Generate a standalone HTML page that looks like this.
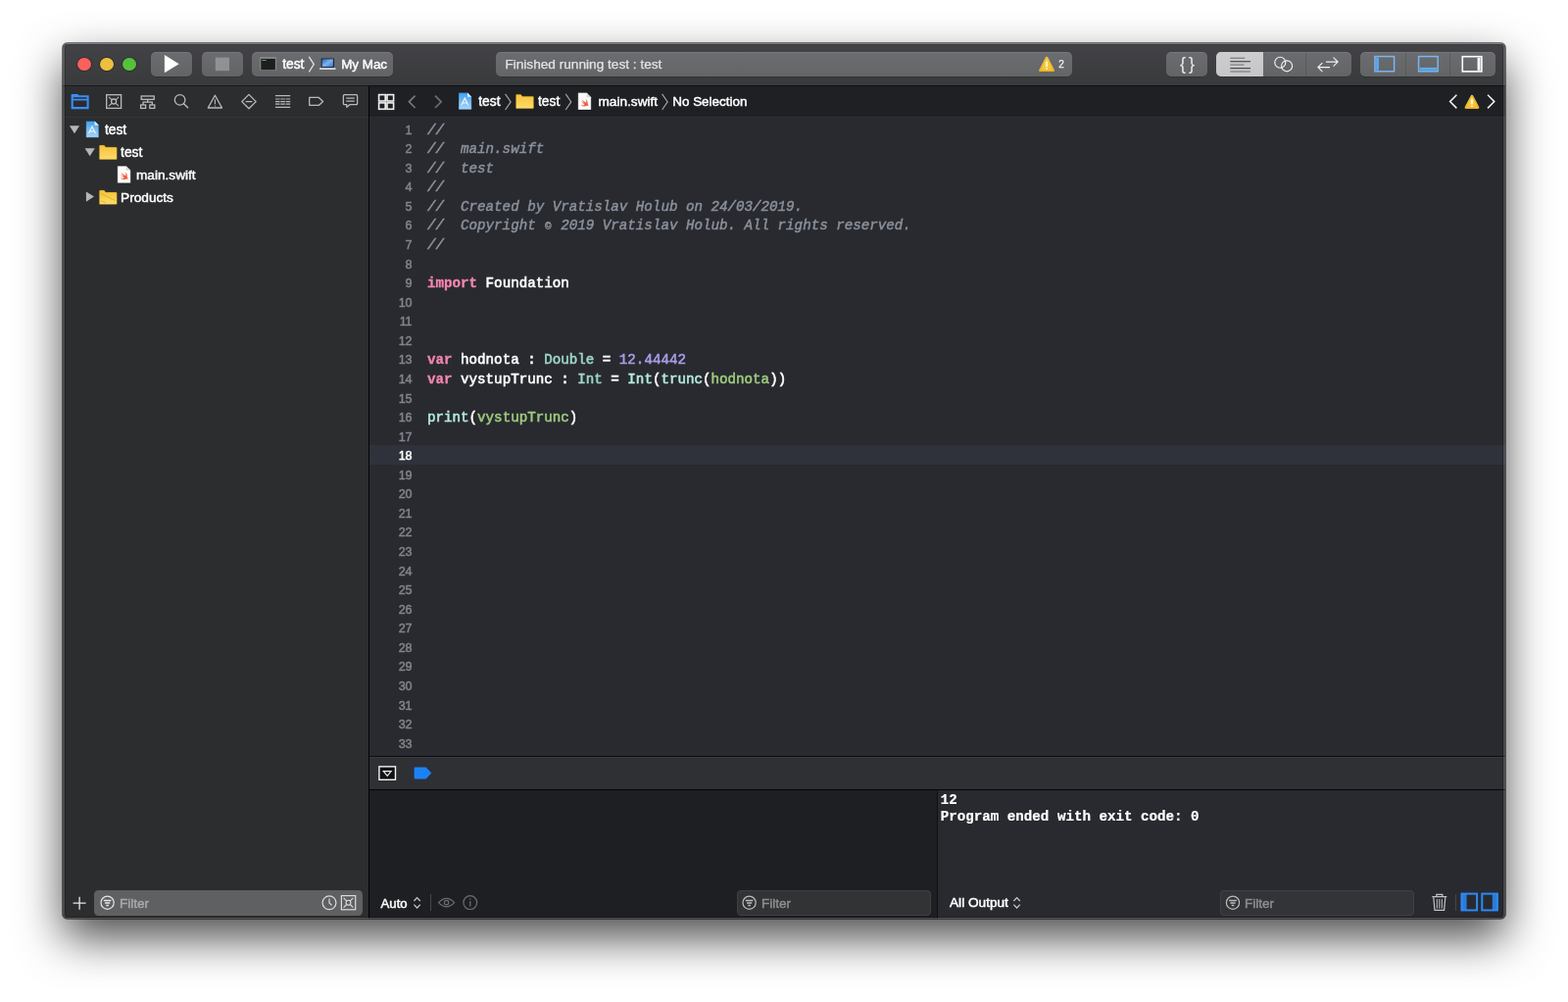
<!DOCTYPE html>
<html lang="en">
<head>
<meta charset="utf-8">
<title>test — main.swift</title>
<style>
html,body{margin:0;padding:0;background:#fff;}
body{width:1600px;height:1022px;overflow:hidden;position:relative;}
#win{position:absolute;left:64px;top:44px;width:1472px;height:893px;border-radius:5px;background:#292a30;
  box-shadow:0 0 0 1px rgba(0,0,0,.5),0 20px 46px rgba(0,0,0,.7);overflow:hidden;will-change:transform;}
#win>div,#win>span,#win>svg{position:absolute;}
#rim{left:0;top:0;width:1472px;height:893px;box-sizing:border-box;border-radius:5px;border:2px solid rgba(255,255,255,.14);border-top:1px solid rgba(255,255,255,.33);border-bottom:1px solid rgba(255,255,255,.2);pointer-events:none;}
#rim>div{width:100%;height:100%;box-sizing:border-box;border-radius:4px;border:1px solid rgba(0,0,0,.22);border-top-color:rgba(0,0,0,.12);}
.t{white-space:pre;}
.s{font-family:"Liberation Sans",sans-serif;-webkit-text-stroke:0.45px currentColor;}
.m{font-family:"Liberation Mono",monospace;-webkit-text-stroke:0.55px currentColor;}
.m b{-webkit-text-stroke:0.3px currentColor;}
.m i{-webkit-text-stroke:0.45px currentColor;}
svg{overflow:visible;}
#ico{left:0;top:0;pointer-events:none;}

</style>
</head>
<body>
<div id="win">
<div style="left:0px;top:0px;width:1472px;height:43px;background:linear-gradient(#434347,#393a3c);"></div>
<div style="left:0px;top:42.6px;width:312px;height:1.4px;background:#1a1b1d;"></div>
<div style="left:312px;top:42.7px;width:1160px;height:1.3px;background:#101113;"></div>
<div style="left:0px;top:44px;width:312px;height:849px;background:#2c2d2f;"></div>
<div style="left:0px;top:75px;width:312px;height:1px;background:#353638;"></div>
<div style="left:312px;top:44px;width:1px;height:849px;background:#040406;"></div>
<div style="left:313px;top:44px;width:1159px;height:31px;background:#1f2024;"></div>
<div style="left:313px;top:75px;width:1159px;height:1px;background:#2e2f34;"></div>
<div style="left:313px;top:76px;width:1159px;height:651px;background:#292a30;"></div>
<div style="left:313px;top:410px;width:1159px;height:19.5px;background:#2f323b;"></div>
<div style="left:313px;top:727.2px;width:1159px;height:1.2px;background:#0c0d0f;"></div>
<div style="left:313px;top:728.4px;width:1159px;height:32.6px;background:linear-gradient(#38393d 0,#38393d 1px,#2f3034 1.5px);"></div>
<div style="left:313px;top:760.9px;width:1159px;height:1.1px;background:#040406;"></div>
<div style="left:313px;top:762px;width:579px;height:131px;background:#1e1f23;"></div>
<div style="left:892px;top:762px;width:1px;height:131px;background:#0e0f11;"></div>
<div style="left:893px;top:762px;width:579px;height:131px;background:#292a30;"></div>
<div style="left:15.4px;top:14.6px;width:13.8px;height:13.8px;border-radius:50%;background:#fd605c;box-shadow:0 0 0 .8px rgba(0,0,0,.3);"></div>
<div style="left:38.3px;top:14.6px;width:13.8px;height:13.8px;border-radius:50%;background:#ecc03d;box-shadow:0 0 0 .8px rgba(0,0,0,.3);"></div>
<div style="left:61.2px;top:14.6px;width:13.8px;height:13.8px;border-radius:50%;background:#58c13c;box-shadow:0 0 0 .8px rgba(0,0,0,.3);"></div>
<div style="left:89.9px;top:8.6px;width:42.4px;height:25.4px;border-radius:5px;background:linear-gradient(#6b6c6f,#636466);box-shadow:inset 0 1px 0 rgba(255,255,255,.08),0 .5px .6px rgba(0,0,0,.28);"></div>
<div style="left:141.9px;top:8.6px;width:41.9px;height:25.4px;border-radius:5px;background:linear-gradient(#6b6c6f,#636466);box-shadow:inset 0 1px 0 rgba(255,255,255,.08),0 .5px .6px rgba(0,0,0,.28);"></div>
<div style="left:193.2px;top:8.6px;width:143.4px;height:25.4px;border-radius:5px;background:linear-gradient(#6b6c6f,#636466);box-shadow:inset 0 1px 0 rgba(255,255,255,.08),0 .5px .6px rgba(0,0,0,.28);"></div>
<div style="left:442.1px;top:8.6px;width:588.1px;height:25.4px;border-radius:5px;background:linear-gradient(#6c6d70,#646567);box-shadow:inset 0 1px 0 rgba(255,255,255,.08),0 .5px .6px rgba(0,0,0,.28);"></div>
<div style="left:1125.7px;top:8.6px;width:42.2px;height:25.4px;border-radius:5px;background:linear-gradient(#6b6c6f,#636466);box-shadow:inset 0 1px 0 rgba(255,255,255,.08),0 .5px .6px rgba(0,0,0,.28);"></div>
<div style="left:1177px;top:8.6px;width:138.2px;height:25.4px;border-radius:5px;background:linear-gradient(#6b6c6f,#636466);box-shadow:inset 0 1px 0 rgba(255,255,255,.08),0 .5px .6px rgba(0,0,0,.28);"></div>
<div style="left:1177px;top:8.6px;width:47.5px;height:25.4px;border-radius:5px 0 0 5px;background:linear-gradient(#cdcdcf,#c6c6c8);"></div>
<div style="left:1268px;top:8.5px;width:1px;height:25.5px;background:rgba(0,0,0,.12);"></div>
<div style="left:1324.4px;top:8.6px;width:138px;height:25.4px;border-radius:5px;background:linear-gradient(#6b6c6f,#636466);box-shadow:inset 0 1px 0 rgba(255,255,255,.08),0 .5px .6px rgba(0,0,0,.28);"></div>
<div style="left:1370.4px;top:8.5px;width:1px;height:25.5px;background:rgba(0,0,0,.12);"></div>
<div style="left:1414.75px;top:8.5px;width:1px;height:25.5px;background:rgba(0,0,0,.12);"></div>
<span class="t s" style="left:224.2px;top:12px;font-size:13.8px;line-height:20px;color:#fff;">test</span>
<span class="t s" style="left:284.2px;top:12px;font-size:13.4px;line-height:20px;color:#fff;">My Mac</span>
<span class="t s" style="left:451.4px;top:12px;font-size:13.65px;line-height:20px;color:#e4e4e4;-webkit-text-stroke:0.25px currentColor;">Finished running test : test</span>
<span class="t s" style="left:1016.2px;top:12px;font-size:10px;line-height:20px;color:#f0f0f0;-webkit-text-stroke:0.25px currentColor;">2</span>
<span class="t s" style="left:1139.9px;top:9px;font-size:18px;line-height:24px;color:rgba(255,255,255,.86);-webkit-text-stroke:0;">{</span>
<span class="t s" style="left:1149px;top:9px;font-size:18px;line-height:24px;color:rgba(255,255,255,.86);-webkit-text-stroke:0;">}</span>
<span class="t s" style="left:42.9px;top:79px;font-size:13.8px;line-height:20px;color:#fff;">test</span>
<span class="t s" style="left:59.1px;top:102px;font-size:13.8px;line-height:20px;color:#fff;">test</span>
<span class="t s" style="left:75px;top:125px;font-size:13.65px;line-height:20px;color:#fff;">main.swift</span>
<span class="t s" style="left:59.1px;top:148px;font-size:13.65px;line-height:20px;color:#fff;">Products</span>
<span class="t s" style="left:424.25px;top:50px;font-size:13.8px;line-height:20px;color:#fff;">test</span>
<span class="t s" style="left:485px;top:50px;font-size:13.8px;line-height:20px;color:#fff;">test</span>
<span class="t s" style="left:546.5px;top:50px;font-size:13.65px;line-height:20px;color:#fff;">main.swift</span>
<span class="t s" style="left:622.25px;top:50px;font-size:13.45px;line-height:20px;color:#fff;">No Selection</span>
<span class="t s" style="right:1115.7px;top:79px;font-size:12.65px;line-height:20px;color:#83858c;letter-spacing:-0.3px;">1</span>
<span class="t m" style="left:372px;top:79px;font-size:14.2px;line-height:20px;color:#ffffff;"><i style="color:#8a919b">//</i></span>
<span class="t s" style="right:1115.7px;top:98px;font-size:12.65px;line-height:20px;color:#83858c;letter-spacing:-0.3px;">2</span>
<span class="t m" style="left:372px;top:98px;font-size:14.2px;line-height:20px;color:#ffffff;"><i style="color:#8a919b">//  main.swift</i></span>
<span class="t s" style="right:1115.7px;top:118px;font-size:12.65px;line-height:20px;color:#83858c;letter-spacing:-0.3px;">3</span>
<span class="t m" style="left:372px;top:118px;font-size:14.2px;line-height:20px;color:#ffffff;"><i style="color:#8a919b">//  test</i></span>
<span class="t s" style="right:1115.7px;top:137px;font-size:12.65px;line-height:20px;color:#83858c;letter-spacing:-0.3px;">4</span>
<span class="t m" style="left:372px;top:137px;font-size:14.2px;line-height:20px;color:#ffffff;"><i style="color:#8a919b">//</i></span>
<span class="t s" style="right:1115.7px;top:157px;font-size:12.65px;line-height:20px;color:#83858c;letter-spacing:-0.3px;">5</span>
<span class="t m" style="left:372px;top:157px;font-size:14.2px;line-height:20px;color:#ffffff;"><i style="color:#8a919b">//  Created by Vratislav Holub on 24/03/2019.</i></span>
<span class="t s" style="right:1115.7px;top:176px;font-size:12.65px;line-height:20px;color:#83858c;letter-spacing:-0.3px;">6</span>
<span class="t m" style="left:372px;top:176px;font-size:14.2px;line-height:20px;color:#ffffff;"><i style="color:#8a919b">//  Copyright <span style="display:inline-block;width:8.52px;text-align:center;font-size:10.5px;vertical-align:0.3px;">©</span> 2019 Vratislav Holub. All rights reserved.</i></span>
<span class="t s" style="right:1115.7px;top:196px;font-size:12.65px;line-height:20px;color:#83858c;letter-spacing:-0.3px;">7</span>
<span class="t m" style="left:372px;top:196px;font-size:14.2px;line-height:20px;color:#ffffff;"><i style="color:#8a919b">//</i></span>
<span class="t s" style="right:1115.7px;top:216px;font-size:12.65px;line-height:20px;color:#83858c;letter-spacing:-0.3px;">8</span>
<span class="t s" style="right:1115.7px;top:235px;font-size:12.65px;line-height:20px;color:#83858c;letter-spacing:-0.3px;">9</span>
<span class="t m" style="left:372px;top:235px;font-size:14.2px;line-height:20px;color:#ffffff;"><b style="color:#f486b2">import</b> Foundation</span>
<span class="t s" style="right:1115.7px;top:255px;font-size:12.65px;line-height:20px;color:#83858c;letter-spacing:-0.3px;">10</span>
<span class="t s" style="right:1115.7px;top:274px;font-size:12.65px;line-height:20px;color:#83858c;letter-spacing:-0.3px;">11</span>
<span class="t s" style="right:1115.7px;top:294px;font-size:12.65px;line-height:20px;color:#83858c;letter-spacing:-0.3px;">12</span>
<span class="t s" style="right:1115.7px;top:313px;font-size:12.65px;line-height:20px;color:#83858c;letter-spacing:-0.3px;">13</span>
<span class="t m" style="left:372px;top:313px;font-size:14.2px;line-height:20px;color:#ffffff;"><b style="color:#f486b2">var</b> hodnota : <span style="color:#9dd6c6">Double</span> = <span style="color:#a59de6">12.44442</span></span>
<span class="t s" style="right:1115.7px;top:333px;font-size:12.65px;line-height:20px;color:#83858c;letter-spacing:-0.3px;">14</span>
<span class="t m" style="left:372px;top:333px;font-size:14.2px;line-height:20px;color:#ffffff;"><b style="color:#f486b2">var</b> vystupTrunc : <span style="color:#9dd6c6">Int</span> = <span style="color:#b3ebdf">Int</span>(<span style="color:#b3ebdf">trunc</span>(<span style="color:#9ccb7e">hodnota</span>))</span>
<span class="t s" style="right:1115.7px;top:353px;font-size:12.65px;line-height:20px;color:#83858c;letter-spacing:-0.3px;">15</span>
<span class="t s" style="right:1115.7px;top:372px;font-size:12.65px;line-height:20px;color:#83858c;letter-spacing:-0.3px;">16</span>
<span class="t m" style="left:372px;top:372px;font-size:14.2px;line-height:20px;color:#ffffff;"><span style="color:#b3ebdf">print</span>(<span style="color:#9ccb7e">vystupTrunc</span>)</span>
<span class="t s" style="right:1115.7px;top:392px;font-size:12.65px;line-height:20px;color:#83858c;letter-spacing:-0.3px;">17</span>
<span class="t s" style="right:1115.7px;top:411px;font-size:12.65px;line-height:20px;color:#fff;letter-spacing:-0.3px;">18</span>
<span class="t s" style="right:1115.7px;top:431px;font-size:12.65px;line-height:20px;color:#83858c;letter-spacing:-0.3px;">19</span>
<span class="t s" style="right:1115.7px;top:450px;font-size:12.65px;line-height:20px;color:#83858c;letter-spacing:-0.3px;">20</span>
<span class="t s" style="right:1115.7px;top:470px;font-size:12.65px;line-height:20px;color:#83858c;letter-spacing:-0.3px;">21</span>
<span class="t s" style="right:1115.7px;top:489px;font-size:12.65px;line-height:20px;color:#83858c;letter-spacing:-0.3px;">22</span>
<span class="t s" style="right:1115.7px;top:509px;font-size:12.65px;line-height:20px;color:#83858c;letter-spacing:-0.3px;">23</span>
<span class="t s" style="right:1115.7px;top:529px;font-size:12.65px;line-height:20px;color:#83858c;letter-spacing:-0.3px;">24</span>
<span class="t s" style="right:1115.7px;top:548px;font-size:12.65px;line-height:20px;color:#83858c;letter-spacing:-0.3px;">25</span>
<span class="t s" style="right:1115.7px;top:568px;font-size:12.65px;line-height:20px;color:#83858c;letter-spacing:-0.3px;">26</span>
<span class="t s" style="right:1115.7px;top:587px;font-size:12.65px;line-height:20px;color:#83858c;letter-spacing:-0.3px;">27</span>
<span class="t s" style="right:1115.7px;top:607px;font-size:12.65px;line-height:20px;color:#83858c;letter-spacing:-0.3px;">28</span>
<span class="t s" style="right:1115.7px;top:626px;font-size:12.65px;line-height:20px;color:#83858c;letter-spacing:-0.3px;">29</span>
<span class="t s" style="right:1115.7px;top:646px;font-size:12.65px;line-height:20px;color:#83858c;letter-spacing:-0.3px;">30</span>
<span class="t s" style="right:1115.7px;top:666px;font-size:12.65px;line-height:20px;color:#83858c;letter-spacing:-0.3px;">31</span>
<span class="t s" style="right:1115.7px;top:685px;font-size:12.65px;line-height:20px;color:#83858c;letter-spacing:-0.3px;">32</span>
<span class="t s" style="right:1115.7px;top:705px;font-size:12.65px;line-height:20px;color:#83858c;letter-spacing:-0.3px;">33</span>
<span class="t m" style="left:895.7px;top:762px;font-size:14.2px;line-height:20px;color:#fff;font-weight:700;-webkit-text-stroke:0.2px #fff;">12</span>
<span class="t m" style="left:895.7px;top:779px;font-size:14.2px;line-height:20px;color:#fff;font-weight:700;-webkit-text-stroke:0.2px #fff;">Program ended with exit code: 0</span>
<div style="left:32.25px;top:864px;width:273.75px;height:25.75px;border-radius:4.5px;background:#5f6062;"></div>
<span class="t s" style="left:58px;top:868px;font-size:13.5px;line-height:20px;color:#a9a9ab;">Filter</span>
<span class="t s" style="left:324.5px;top:868px;font-size:13.2px;line-height:20px;color:#fff;">Auto</span>
<div style="left:375px;top:868px;width:1px;height:17px;background:#46474a;"></div>
<div style="left:687.5px;top:864px;width:198.5px;height:25.75px;border-radius:4.5px;background:#323335;box-shadow:inset 0 0 0 1px #3f4042;"></div>
<span class="t s" style="left:713px;top:868px;font-size:13.5px;line-height:20px;color:#8e8e90;">Filter</span>
<span class="t s" style="left:905px;top:867px;font-size:13.65px;line-height:20px;color:#fff;">All Output</span>
<div style="left:1181px;top:864px;width:197.5px;height:25.75px;border-radius:4.5px;background:#333437;box-shadow:inset 0 0 0 1px #404144;"></div>
<span class="t s" style="left:1206px;top:868px;font-size:13.5px;line-height:20px;color:#8e8e90;">Filter</span>
<div style="left:1421px;top:868px;width:1px;height:17px;background:#46474a;"></div>
<svg id="ico" width="1472" height="893" viewBox="64 44 1472 893"><path d="M167.9 56.1 L182.7 65.3 L167.9 74.3 Z" fill="#fff"/>
<rect x="219.8" y="58.6" width="14.2" height="13.6" fill="#909193"/>
<rect x="265.3" y="58.3" width="16.6" height="13.8" rx="1" fill="#8d8e90"/>
<rect x="266.3" y="59.9" width="14.6" height="11.4" fill="#1c1f1c"/>
<rect x="267.3" y="61" width="4.5" height="1" fill="#6f8f6f"/>
<path d="M315.3 57.8 L320.3 65.6 L315.3 73.4" fill="none" stroke="#e4e4e4" stroke-width="1.25"/>
<defs><linearGradient id="gmac" x1="0" y1="0" x2="1" y2="1"><stop offset="0" stop-color="#2d62bd"/><stop offset=".5" stop-color="#7db3ec"/><stop offset="1" stop-color="#3a76cf"/></linearGradient><linearGradient id="gproj" x1="0" y1="0" x2="0" y2="1"><stop offset="0" stop-color="#41a0ea"/><stop offset="1" stop-color="#a9d6fb"/></linearGradient><linearGradient id="gfold" x1="0" y1="0" x2="0" y2="1"><stop offset="0" stop-color="#f6c136"/><stop offset="1" stop-color="#fcdc6c"/></linearGradient><linearGradient id="gwarn" x1="0" y1="0" x2="0" y2="1"><stop offset="0" stop-color="#fcd552"/><stop offset="1" stop-color="#f6bf2e"/></linearGradient></defs>
<rect x="327.7" y="59.4" width="13.2" height="9.6" rx="0.8" fill="#14203a"/>
<rect x="328.7" y="60.3" width="11.2" height="7.8" fill="url(#gmac)"/>
<rect x="326" y="69.3" width="16.6" height="1.8" rx="0.7" fill="#d9dadc"/>
<path d="M1068.10 59.20 L1074.70 71.80 L1061.50 71.80 Z" fill="url(#gwarn)" stroke="url(#gwarn)" stroke-width="2.6" stroke-linejoin="round"/>
<path d="M1068.10 58.50 L1075.30 72.30 L1060.90 72.30 Z" fill="none" stroke="#d6a21f" stroke-opacity=".75" stroke-width=".8" stroke-linejoin="round"/>
<rect x="1067.15" y="62.71" width="1.9" height="5.72" rx="0.9" fill="#fff6d6"/>
<rect x="1067.15" y="69.22" width="1.9" height="1.9" rx="0.95" fill="#fff6d6"/>
<path d="M1502.00 98.20 L1508.10 109.60 L1495.90 109.60 Z" fill="url(#gwarn)" stroke="url(#gwarn)" stroke-width="2.6" stroke-linejoin="round"/>
<path d="M1502.00 97.50 L1508.70 110.10 L1495.30 110.10 Z" fill="none" stroke="#d6a21f" stroke-opacity=".75" stroke-width=".8" stroke-linejoin="round"/>
<rect x="1501.05" y="101.30" width="1.9" height="5.29" rx="0.9" fill="#fff6d6"/>
<rect x="1501.05" y="107.33" width="1.9" height="1.9" rx="0.95" fill="#fff6d6"/>
<rect x="1255.3" y="58.70" width="15.00" height="1.2" fill="#7c7c7e"/>
<rect x="1255.3" y="62.10" width="20.70" height="1.2" fill="#4a4a4c"/>
<rect x="1255.3" y="65.50" width="14.20" height="1.2" fill="#7c7c7e"/>
<rect x="1255.3" y="69.00" width="20.70" height="1.2" fill="#4a4a4c"/>
<rect x="1255.3" y="72.40" width="20.70" height="1.2" fill="#7c7c7e"/>
<circle cx="1306.3" cy="63.7" r="5.5" fill="none" stroke="#f2f2f2" stroke-width="1.15"/>
<circle cx="1313.1" cy="67.3" r="5.5" fill="none" stroke="#f2f2f2" stroke-width="1.15"/>
<path d="M1353 63.1 H1365 M1360.6 58.6 L1365.1 63.1 L1360.6 67.6 M1357 68.6 H1345 M1349.4 64.1 L1344.9 68.6 L1349.4 73.1" fill="none" stroke="#f2f2f2" stroke-width="1.15"/>
<rect x="1403" y="57.6" width="19.6" height="15.2" fill="none" stroke="#78b6ef" stroke-width="1.5"/>
<rect x="1404.2" y="58.8" width="2.7" height="12.8" fill="#5aadf8"/>
<rect x="1447.6" y="57.6" width="19.6" height="15.2" fill="none" stroke="#78b6ef" stroke-width="1.5"/>
<rect x="1448.8" y="68.9" width="17.2" height="2.7" fill="#5aadf8"/>
<rect x="1492.3" y="57.7" width="19.6" height="15.2" fill="none" stroke="#fff" stroke-width="1.6"/>
<rect x="1507.6" y="58.8" width="2.9" height="13" fill="#fff"/>
<path d="M73.7 98.3 H89.6 V110.1 H73.7 Z" fill="none" stroke="#3b8df7" stroke-width="2.1" stroke-linejoin="miter"/>
<path d="M72.75 98.6 V96.1 H79.6 L81.2 98.6 Z" fill="#3b8df7"/>
<path d="M73.6 101.7 H89.7" stroke="#3b8df7" stroke-width="1.7"/>
<rect x="108.7" y="96.7" width="14.9" height="13.7" fill="none" stroke="#bababc" stroke-width="1.3"/>
<circle cx="116.1" cy="103.5" r="2.5" fill="none" stroke="#bababc" stroke-width="1.3"/>
<path d="M111 98.9 L114.2 101.8 M121.2 98.9 L118 101.8 M111 108.2 L114.2 105.3 M121.2 108.2 L118 105.3" stroke="#bababc" stroke-width="1.1"/>
<rect x="144.2" y="98" width="13" height="3.4" fill="none" stroke="#bababc" stroke-width="1.3"/>
<rect x="143.6" y="107" width="5" height="3.4" fill="none" stroke="#bababc" stroke-width="1.3"/>
<rect x="152.8" y="107" width="5" height="3.4" fill="none" stroke="#bababc" stroke-width="1.3"/>
<path d="M146.1 107 V104.2 H155.3 V107 M150.7 101.4 V104.2" fill="none" stroke="#bababc" stroke-width="1.3"/>
<circle cx="183.6" cy="101.9" r="5.3" fill="none" stroke="#bababc" stroke-width="1.3"/>
<path d="M187.5 105.8 L191.6 109.8" stroke="#bababc" stroke-width="1.5" stroke-linecap="round"/>
<path d="M219.4 97.2 L226.5 110 H212.3 Z" fill="none" stroke="#bababc" stroke-width="1.3" stroke-linejoin="round"/>
<path d="M219.4 101.2 V106.3 M219.4 107.5 V108.6" stroke="#bababc" stroke-width="1.1"/>
<path d="M254 96.4 L261.2 103.6 L254 110.8 L246.8 103.6 Z" fill="none" stroke="#bababc" stroke-width="1.3" stroke-linejoin="round"/>
<path d="M250.6 103.6 H257.4" stroke="#bababc" stroke-width="1.3"/>
<path d="M281 97.7 H296.2 M281 109.3 H296.2" stroke="#bababc" stroke-width="1.3"/>
<path d="M281 101 H296.2" stroke="#bababc" stroke-width="1.1" stroke-dasharray="4.6 0.7"/>
<path d="M281 103.6 H296.2" stroke="#bababc" stroke-width="1.1" stroke-dasharray="4.6 0.7"/>
<path d="M281 106.1 H296.2" stroke="#bababc" stroke-width="1.1" stroke-dasharray="4.6 0.7"/>
<path d="M315.7 99.4 H325.3 L329.6 103.4 L325.3 107.4 H315.7 Z" fill="none" stroke="#bababc" stroke-width="1.3" stroke-linejoin="round"/>
<path d="M351.4 96.7 H363.6 Q364.6 96.7 364.6 97.7 V105.7 Q364.6 106.7 363.6 106.7 H357 L353.8 109.3 V106.7 H351.4 Q350.4 106.7 350.4 105.7 V97.7 Q350.4 96.7 351.4 96.7 Z" fill="none" stroke="#bababc" stroke-width="1.3" stroke-linejoin="round"/>
<path d="M353.2 100.1 H361.8 M353.2 103.2 H361.8" stroke="#bababc" stroke-width="1.3"/>
<path d="M70.9 128.2 H81.1 L76 136.2 Z" fill="#b6b6b8"/>
<path d="M86.6 151.2 H96.8 L91.7 159.2 Z" fill="#b6b6b8"/>
<path d="M87.9 195.5 L96 200.6 L87.9 205.7 Z" fill="#b6b6b8"/>
<path d="M87.8 123.5 H96.6 L100.8 127.7 V140.3 H87.8 Z" fill="url(#gproj)" stroke="#0c2a4d" stroke-opacity=".55" stroke-width=".6"/>
<path d="M96.6 123.5 V127.7 H100.8 Z" fill="#e3f2fe"/>
<path d="M90.60 136.10 L94.00 129.10 L97.40 136.10 M91.60 133.90 H96.40" fill="none" stroke="#eaf5ff" stroke-width="1.2"/>
<path d="M101.3 149.1 Q101.3 148.1 102.3 148.1 H106.3 L107.89999999999999 150.1 H118.3 Q119.3 150.1 119.3 151.1 V161.89999999999998 Q119.3 162.7 118.5 162.7 H102.1 Q101.3 162.7 101.3 161.89999999999998 Z" fill="url(#gfold)" stroke="#7a5a08" stroke-opacity=".55" stroke-width=".6"/>
<path d="M119.8 169.2 H128.70000000000002 L133.3 173.79999999999998 V186.79999999999998 H119.8 Z" fill="#fdfdfd" stroke="#000" stroke-opacity=".5" stroke-width=".6"/>
<path d="M128.70000000000002 169.2 V173.79999999999998 H133.3 Z" fill="#d8d8da"/>
<path d="M122.85 181.31 C124.75 183.71 127.35 183.61 128.75 182.51 C129.55 182.31 130.05 182.91 130.35 183.51 C130.55 182.11 130.15 181.01 129.65 180.31 C130.15 178.31 129.15 176.71 127.45 175.81 C128.45 177.31 128.55 178.51 128.15 179.51 C126.75 178.61 124.95 177.31 123.55 176.11 C124.35 177.51 125.55 179.11 126.75 180.41 C125.35 179.61 123.95 178.61 122.95 177.71 C123.95 179.31 125.55 180.91 126.85 181.71 C125.55 182.31 124.15 182.11 122.85 181.31 Z" fill="#f05a3c"/>
<path d="M101.3 195 Q101.3 194 102.3 194 H106.3 L107.89999999999999 196 H118.3 Q119.3 196 119.3 197 V207.79999999999998 Q119.3 208.6 118.5 208.6 H102.1 Q101.3 208.6 101.3 207.79999999999998 Z" fill="url(#gfold)" stroke="#7a5a08" stroke-opacity=".55" stroke-width=".6"/>
<path d="M103 197.5 L117.5 204.5 M103 204.8 L108 206.8" stroke="#d9a520" stroke-width="1" opacity=".7" fill="none"/>
<path d="M468 94.6 H477.0 L481.2 98.8 V111.8 H468 Z" fill="url(#gproj)" stroke="#0c2a4d" stroke-opacity=".55" stroke-width=".6"/>
<path d="M477.0 94.6 V98.8 H481.2 Z" fill="#e3f2fe"/>
<path d="M470.90 107.20 L474.30 100.20 L477.70 107.20 M471.90 105.00 H476.70" fill="none" stroke="#eaf5ff" stroke-width="1.2"/>
<path d="M526.4 97.2 Q526.4 96.2 527.4 96.2 H531.4 L533.0 98.2 H543.6 Q544.6 98.2 544.6 99.2 V110.0 Q544.6 110.8 543.8000000000001 110.8 H527.1999999999999 Q526.4 110.8 526.4 110.0 Z" fill="url(#gfold)" stroke="#7a5a08" stroke-opacity=".55" stroke-width=".6"/>
<path d="M589.8 94.6 H598.5999999999999 L603.1999999999999 99.19999999999999 V112.1 H589.8 Z" fill="#fdfdfd" stroke="#000" stroke-opacity=".5" stroke-width=".6"/>
<path d="M598.5999999999999 94.6 V99.19999999999999 H603.1999999999999 Z" fill="#d8d8da"/>
<path d="M592.80 106.65 C594.70 109.05 597.30 108.95 598.70 107.85 C599.50 107.65 600.00 108.25 600.30 108.85 C600.50 107.45 600.10 106.35 599.60 105.65 C600.10 103.65 599.10 102.05 597.40 101.15 C598.40 102.65 598.50 103.85 598.10 104.85 C596.70 103.95 594.90 102.65 593.50 101.45 C594.30 102.85 595.50 104.45 596.70 105.75 C595.30 104.95 593.90 103.95 592.90 103.05 C593.90 104.65 595.50 106.25 596.80 107.05 C595.50 107.65 594.10 107.45 592.80 106.65 Z" fill="#f05a3c"/>
<path d="M515.6 95.8 L521.2 103.9 L515.6 112" fill="none" stroke="#a4a4a6" stroke-width="1.15"/>
<path d="M577.2 95.8 L582.8000000000001 103.9 L577.2 112" fill="none" stroke="#a4a4a6" stroke-width="1.15"/>
<path d="M675.6 95.8 L681.2 103.9 L675.6 112" fill="none" stroke="#a4a4a6" stroke-width="1.15"/>
<rect x="386.6" y="96.6" width="6.6" height="6.4" fill="none" stroke="#f0f0f0" stroke-width="1.6"/>
<rect x="395" y="96.6" width="6.6" height="6.4" fill="none" stroke="#f0f0f0" stroke-width="1.6"/>
<rect x="386.6" y="104.9" width="6.6" height="6.4" fill="none" stroke="#f0f0f0" stroke-width="1.6"/>
<rect x="395" y="104.9" width="6.6" height="6.4" fill="none" stroke="#f0f0f0" stroke-width="1.6"/>
<path d="M393.4 99.8 H395.2 M393.4 108.1 H395.2" stroke="#f0f0f0" stroke-width="1.2" opacity=".7"/>
<path d="M423.6 97.6 L417.4 103.8 L423.6 110" fill="none" stroke="#77787c" stroke-width="1.7"/>
<path d="M444 97.6 L450.2 103.8 L444 110" fill="none" stroke="#6c6d71" stroke-width="1.7"/>
<path d="M1486.4 96.8 L1479.6 103.6 L1486.4 110.4" fill="none" stroke="#f2f2f2" stroke-width="1.5"/>
<path d="M1518 96.8 L1524.8 103.6 L1518 110.4" fill="none" stroke="#f2f2f2" stroke-width="1.5"/>
<rect x="386.9" y="781.9" width="16.6" height="13.4" fill="#111214" stroke="#f4f4f4" stroke-width="1.4"/>
<path d="M391.2 786.6 H399.2 L395.2 791.4 Z" fill="none" stroke="#f4f4f4" stroke-width="1.1"/>
<path d="M423.6 782.6 H434.6 L440.3 788.5 L434.6 794.4 H423.6 Q422.6 794.4 422.6 793.4 V783.6 Q422.6 782.6 423.6 782.6 Z" fill="#1a82f7"/>
<circle cx="109.6" cy="920.7" r="6.6" fill="none" stroke="#e6e6e6" stroke-width="1.2"/>
<path d="M105.8 918.5 H113.39999999999999 M107.0 921.0 H112.19999999999999 M108.3 923.5 H110.89999999999999" stroke="#e6e6e6" stroke-width="1.3"/>
<circle cx="764.6" cy="920.7" r="6.6" fill="none" stroke="#bcbcbe" stroke-width="1.2"/>
<path d="M760.8000000000001 918.5 H768.4 M762.0 921.0 H767.2 M763.3000000000001 923.5 H765.9" stroke="#bcbcbe" stroke-width="1.3"/>
<circle cx="1258" cy="920.7" r="6.6" fill="none" stroke="#bcbcbe" stroke-width="1.2"/>
<path d="M1254.2 918.5 H1261.8 M1255.4 921.0 H1260.6 M1256.7 923.5 H1259.3" stroke="#bcbcbe" stroke-width="1.3"/>
<path d="M74.6 921.2 H87.6 M81.1 914.7 V927.7" stroke="#e8e8e8" stroke-width="1.3"/>
<circle cx="336" cy="920.8" r="6.9" fill="none" stroke="#dcdcdc" stroke-width="1.2"/>
<path d="M336 916.4 V921 L338.6 923.4" fill="none" stroke="#dcdcdc" stroke-width="1.2"/>
<rect x="348.4" y="913.6" width="14.3" height="14.2" fill="none" stroke="#dcdcdc" stroke-width="1.2"/>
<circle cx="355.5" cy="920.7" r="2.4" fill="none" stroke="#dcdcdc" stroke-width="1.1"/>
<path d="M350.6 915.8 L353.7 918.9 M360.4 915.8 L357.3 918.9 M350.6 925.6 L353.7 922.5 M360.4 925.6 L357.3 922.5" stroke="#dcdcdc" stroke-width="1.1"/>
<path d="M422.40000000000003 919.0 L425.6 915.5999999999999 L428.8 919.0 M422.40000000000003 922.5999999999999 L425.6 926.0 L428.8 922.5999999999999" fill="none" stroke="#c9c9cb" stroke-width="1.2"/>
<path d="M1034.3999999999999 919.0 L1037.6 915.5999999999999 L1040.8 919.0 M1034.3999999999999 922.5999999999999 L1037.6 926.0 L1040.8 922.5999999999999" fill="none" stroke="#c9c9cb" stroke-width="1.2"/>
<path d="M447.6 920.6 Q455.6 912 463.6 920.6 Q455.6 929.2 447.6 920.6 Z" fill="none" stroke="#6c6d71" stroke-width="1.2"/>
<circle cx="455.6" cy="920.6" r="2.3" fill="none" stroke="#6c6d71" stroke-width="1.2"/>
<circle cx="479.8" cy="920.6" r="6.9" fill="none" stroke="#6c6d71" stroke-width="1.2"/>
<path d="M479.8 919.2 V924.4 M479.8 916.4 V917.8" stroke="#6c6d71" stroke-width="1.3"/>
<path d="M1461.3 914.6 H1476.3 M1465.8 914.4 V912.4 H1471.8 V914.4" fill="none" stroke="#c4c4c6" stroke-width="1.2"/>
<path d="M1462.8 915.2 L1464 928.4 H1473.6 L1474.8 915.2" fill="none" stroke="#c4c4c6" stroke-width="1.2"/>
<path d="M1466.3 917 V926.6 M1468.8 917 V926.6 M1471.3 917 V926.6" stroke="#c4c4c6" stroke-width="1"/>
<rect x="1491.5" y="911.6" width="15.6" height="16.8" fill="none" stroke="#2b8af7" stroke-width="2"/>
<rect x="1491" y="911" width="5.6" height="18" fill="#2b8af7" opacity=".85"/>
<rect x="1512.3" y="911.6" width="15.6" height="16.8" fill="none" stroke="#2b8af7" stroke-width="2"/>
<rect x="1522.8" y="911" width="5.6" height="18" fill="#2b8af7" opacity=".85"/></svg>
<div id="rim"><div></div></div>
</div>
</body>
</html>
